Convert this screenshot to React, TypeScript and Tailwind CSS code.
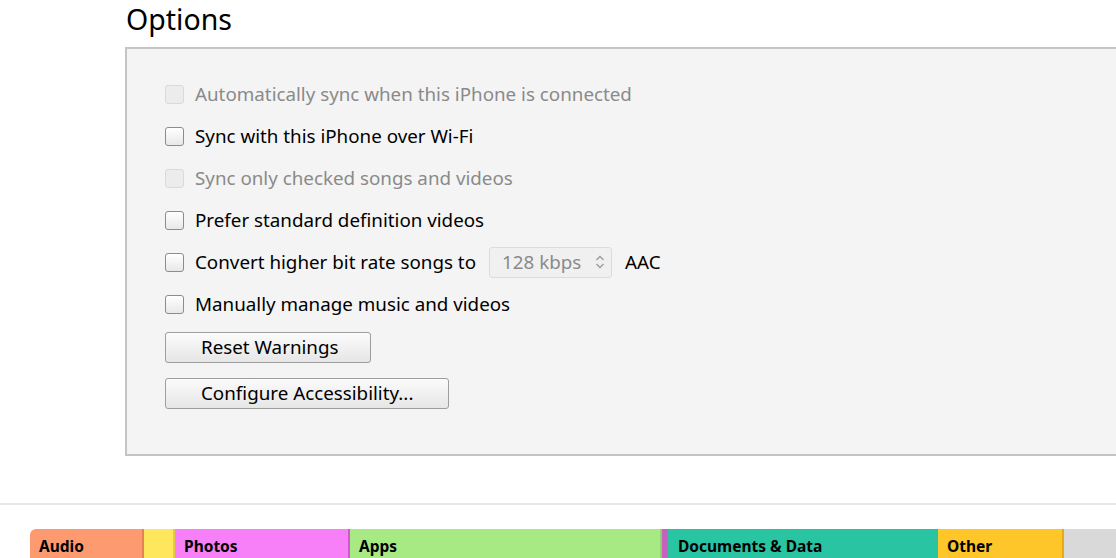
import React from "react";

type Row = { label: string; disabled?: boolean; extra?: boolean };

const rows: Row[] = [
  { label: "Automatically sync when this iPhone is connected", disabled: true },
  { label: "Sync with this iPhone over Wi-Fi" },
  { label: "Sync only checked songs and videos", disabled: true },
  { label: "Prefer standard definition videos" },
  { label: "Convert higher bit rate songs to", extra: true },
  { label: "Manually manage music and videos" },
];

const Checkbox = ({ disabled }: { disabled?: boolean }) =>
  disabled ? (
    <span className="block w-[19px] h-[19px] rounded-[3px] border border-[#dadada] bg-[#ececec]" />
  ) : (
    <span className="block w-[19px] h-[19px] rounded-[3px] border border-[#8c8c8c] bg-gradient-to-b from-white to-[#e8e8e8]" />
  );

const Button = ({ children, className }: { children: React.ReactNode; className: string }) => (
  <button
    className={`${className} h-[31px] pl-[35px] rounded-[3px] border border-[#9e9e9e] bg-gradient-to-b from-[#fbfbfb] to-[#e6e6e6] text-[18.8px] text-black leading-none text-left whitespace-nowrap`}
  >
    {children}
  </button>
);

const segments = [
  { label: "Audio", cls: "w-[114px] pl-[9px] bg-[#fe9a70] border-r-2 border-[#e4835a] rounded-l-[6px]" },
  { label: "", cls: "w-[31px] bg-[#fee75c] border-r-2 border-[#e6cc3e]" },
  { label: "Photos", cls: "w-[175px] pl-[9px] bg-[#f77ff7] border-r-2 border-[#d455d2]" },
  { label: "Apps", cls: "w-[312px] pl-[9px] bg-[#a7ea84] border-r-2 border-[#8fd06c]" },
  { label: "", cls: "w-[6px] bg-[#c860c0]" },
  { label: "Documents & Data", cls: "w-[270px] pl-[10px] bg-[#29c4a1]" },
  { label: "Other", cls: "w-[126px] pl-[9px] bg-[#fec628] border-r-2 border-[#e6aa14]" },
];

export default function App() {
  return (
    <div
      className="w-[1116px] h-[558px] overflow-hidden bg-white relative"
      style={{ fontFamily: '"Noto Sans", "Open Sans", sans-serif' }}
    >
      {/* Title */}
      <h1 className="pl-[126px] h-[47px] text-[28.5px] leading-[38px] text-black font-normal">
        Options
      </h1>

      {/* Options panel */}
      <div className="ml-[125px] mr-[-10px] h-[409px] border-2 border-[#c4c4c4] bg-[#f4f4f4] pt-[24px] pl-[38px]">
        {rows.map((r) => (
          <div key={r.label} className="h-[42px] flex items-center">
            <Checkbox disabled={r.disabled} />
            <span
              className={
                "ml-[11px] text-[18.8px] leading-none " +
                (r.disabled ? "text-[#8a8a8a]" : "text-black")
              }
            >
              {r.label}
            </span>
            {r.extra && (
              <>
                <span className="ml-[13px] h-[31px] w-[123px] flex items-center justify-between pl-[12px] pr-[5px] rounded-[3px] border border-[#dcdcdc] bg-[#f0f0f0] text-[18.8px] text-[#8a8a8a]">
                  128 kbps
                  <svg width="12" height="16" viewBox="0 0 12 16" fill="none" stroke="#9a9a9a" strokeWidth="1.3">
                    <path d="M2.5 6 L6 2.5 L9.5 6" />
                    <path d="M2.5 10 L6 13.5 L9.5 10" />
                  </svg>
                </span>
                <span className="ml-[13px] text-[18.8px] leading-none text-black">AAC</span>
              </>
            )}
          </div>
        ))}
        <div className="mt-[7px] flex flex-col items-start gap-[15px]">
          <Button className="w-[206px]">Reset Warnings</Button>
          <Button className="w-[284px]">Configure Accessibility...</Button>
        </div>
      </div>

      {/* Divider */}
      <div className="mt-[47px] h-[2px] bg-[#e6e6e6]" />

      {/* Capacity bar */}
      <div className="mt-[24px] ml-[30px] flex h-[40px]">
        {segments.map((s, i) => (
          <div
            key={i}
            className={`${s.cls} shrink-0 pt-[8px] text-[15.5px] font-bold text-black leading-[18px] whitespace-nowrap overflow-hidden`}
          >
            {s.label}
          </div>
        ))}
        <div className="flex-1 bg-[#d9d9d9]" />
      </div>
    </div>
  );
}
